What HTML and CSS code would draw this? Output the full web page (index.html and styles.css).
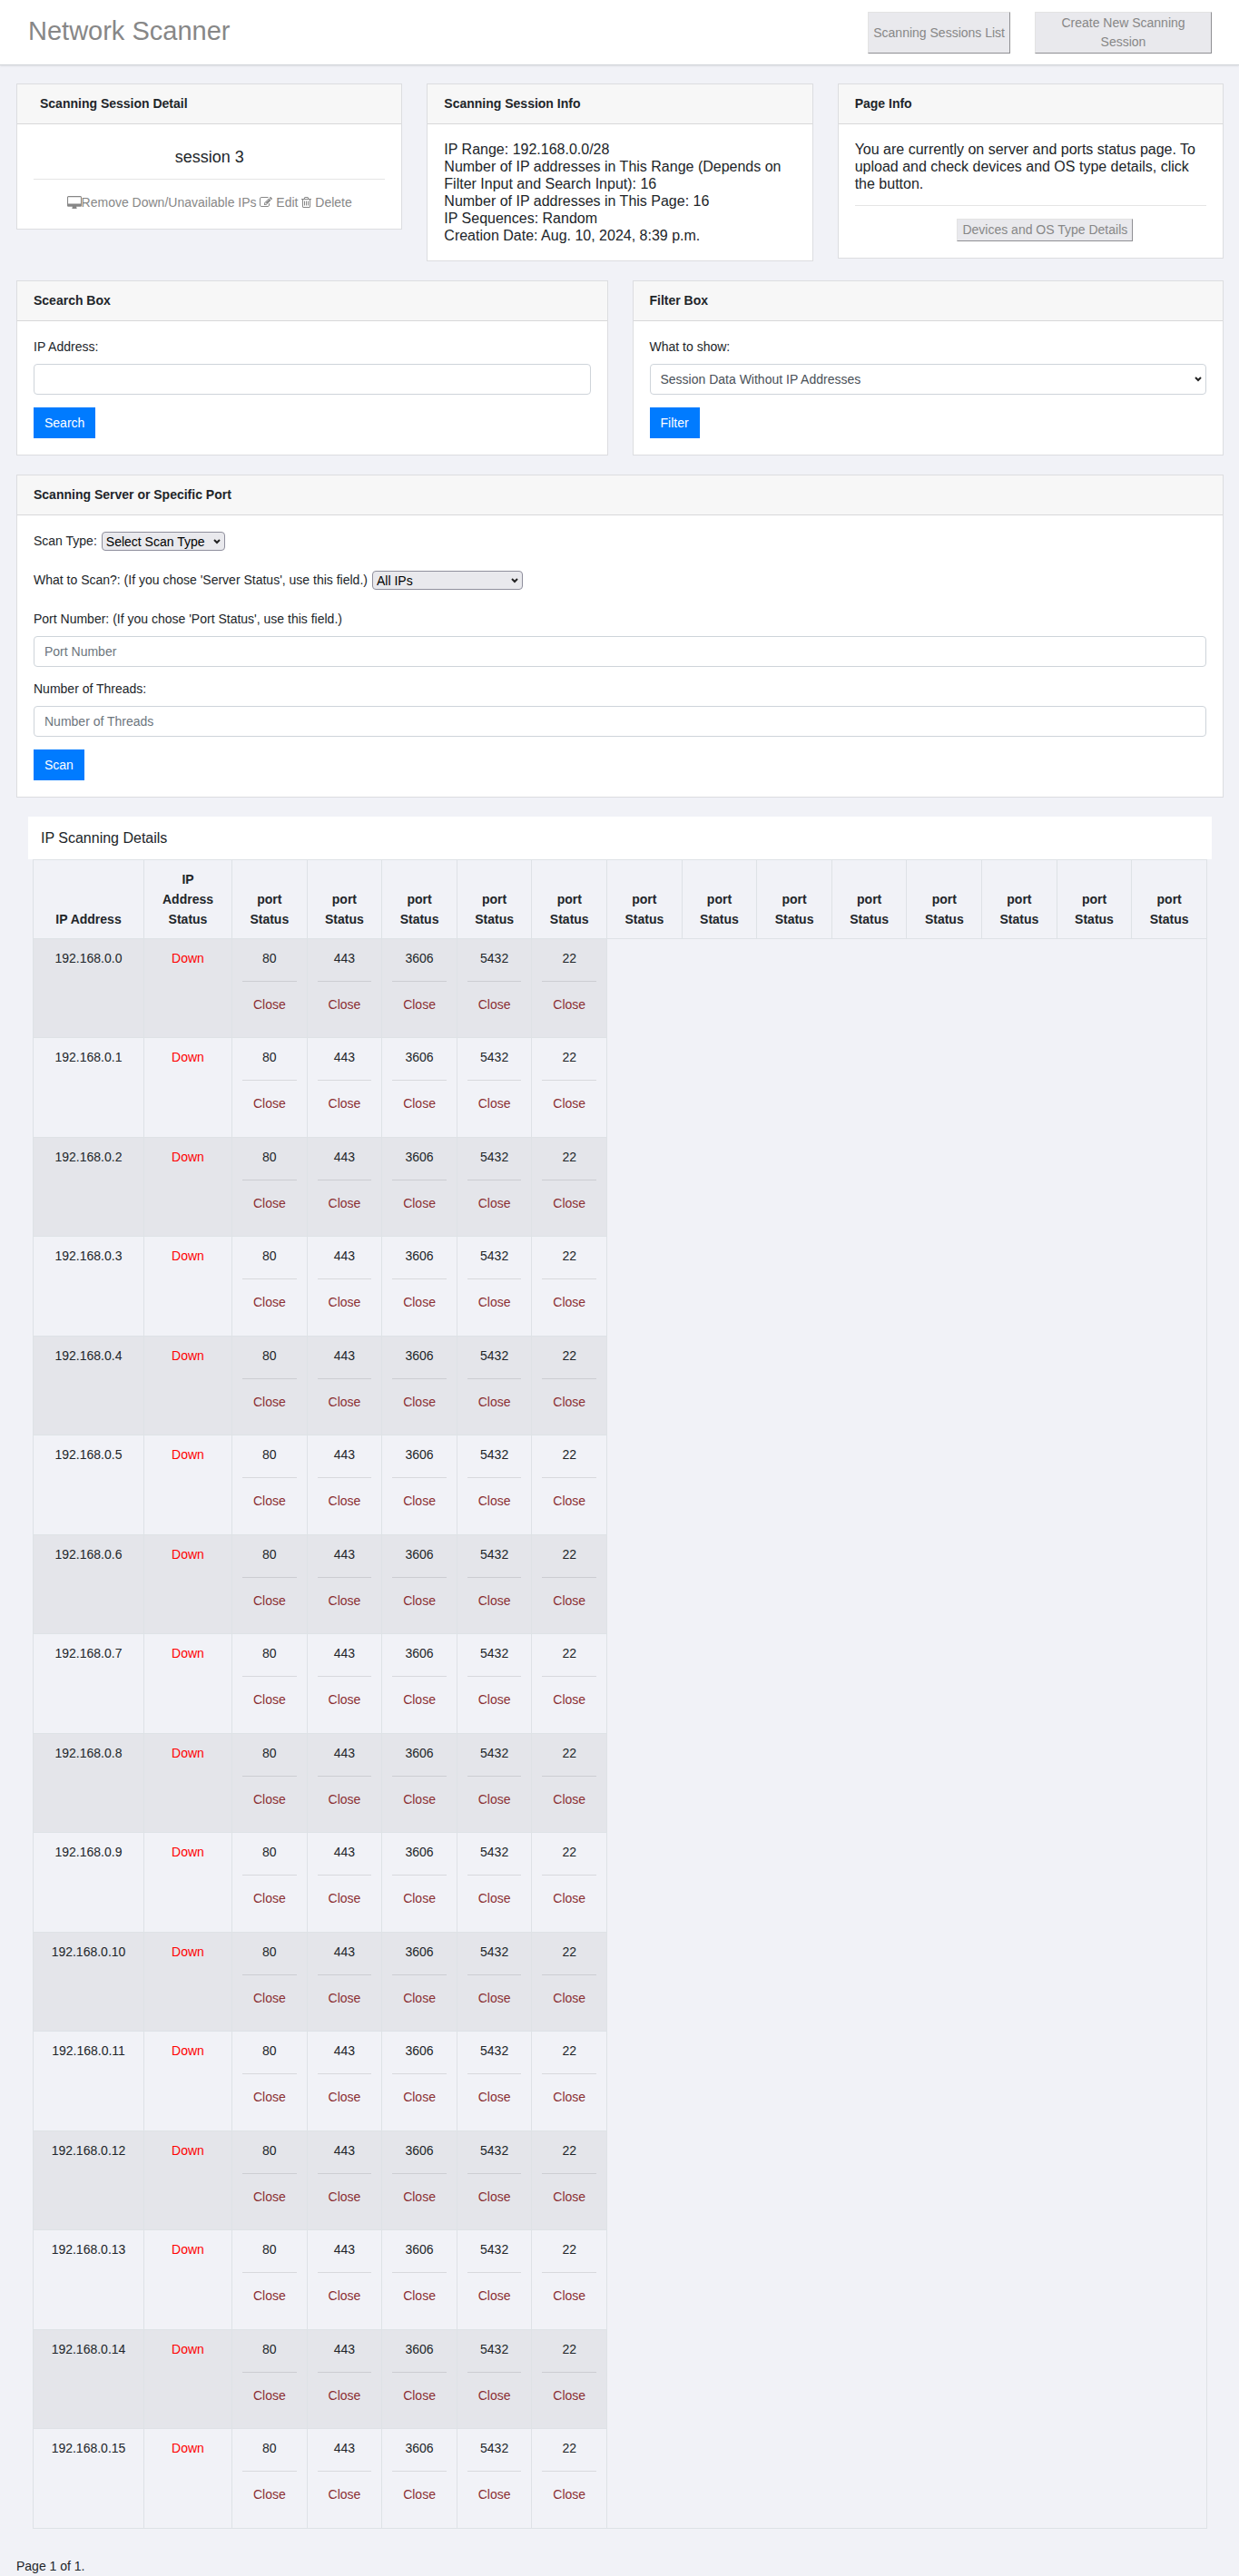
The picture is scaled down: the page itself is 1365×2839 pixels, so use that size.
FILE: index.html
```html
<!DOCTYPE html>
<html lang="en">
<head>
<meta charset="utf-8">
<title>Network Scanner</title>
<link rel="stylesheet" href="styles.css">
</head>
<body>
<header class="topbar">
  <h1 class="brand">Network Scanner</h1>
  <nav class="topbar-actions">
    <button type="button" class="plain-btn">Scanning Sessions List</button>
    <button type="button" class="plain-btn wide">Create New Scanning Session</button>
  </nav>
</header>

<main class="page">
  <div class="grid three">
    <section class="card">
      <h2 class="card-header inset">Scanning Session Detail</h2>
      <div class="card-body centered">
        <h3 class="session-name">session 3</h3>
        <hr>
        <div class="links">
          <a href="#remove"><svg class="icon desktop" viewBox="0 0 1920 1664" aria-hidden="true"><path d="M1792 992v-832q0-13-9.500-22.500t-22.500-9.500h-1600q-13 0-22.500 9.500t-9.500 22.500v832q0 13 9.500 22.500t22.500 9.500h1600q13 0 22.500-9.500t9.500-22.500zm128-832v1088q0 66-47 113t-113 47h-544q0 37 16 77.500t32 71 16 43.500q0 26-19 45t-45 19h-512q-26 0-45-19t-19-45q0-14 16-44t32-70 16-78h-544q-66 0-113-47t-47-113v-1088q0-66 47-113t113-47h1600q66 0 113 47t47 113z"/></svg>Remove Down/Unavailable IPs</a>
          <a href="#edit"><svg class="icon" viewBox="0 0 1792 1792" aria-hidden="true"><path d="M888 1184l116-116-152-152-116 116v56h96v96h56zm440-720q-16-16-33 1l-350 350q-17 17-1 33t33-1l350-350q17-17 1-33zm80 594v190q0 119-84.500 203.500t-203.500 84.500h-832q-119 0-203.500-84.500t-84.500-203.500v-832q0-119 84.500-203.500t203.500-84.500h832q63 0 117 25 15 7 18 23 3 17-9 29l-49 49q-14 14-32 8-23-6-45-6h-832q-66 0-113 47t-47 113v832q0 66 47 113t113 47h832q66 0 113-47t47-113v-126q0-13 9-22l64-64q15-15 35-7t20 29zm-96-738l288 288-672 672h-288v-288zm444 132l-92 92-288-288 92-92q28-28 68-28t68 28l152 152q28 28 28 68t-28 68z"/></svg> Edit</a>
          <a href="#delete"><svg class="icon trash" viewBox="192 0 1408 1792" aria-hidden="true"><path d="M704 736v576q0 14-9 23t-23 9h-64q-14 0-23-9t-9-23v-576q0-14 9-23t23-9h64q14 0 23 9t9 23zm256 0v576q0 14-9 23t-23 9h-64q-14 0-23-9t-9-23v-576q0-14 9-23t23-9h64q14 0 23 9t9 23zm256 0v576q0 14-9 23t-23 9h-64q-14 0-23-9t-9-23v-576q0-14 9-23t23-9h64q14 0 23 9t9 23zm128 724v-948h-896v948q0 22 7 40.500t14.500 27 10.500 8.500h832q3 0 10.500-8.500t14.500-27 7-40.500zm-672-1076h448l-48-117q-7-9-17-11h-317q-10 2-17 11zm928 32v64q0 14-9 23t-23 9h-96v948q0 83-47 143.500t-113 60.500h-832q-66 0-113-58.500t-47-141.500v-952h-96q-14 0-23-9t-9-23v-64q0-14 9-23t23-9h309l70-167q15-37 54-63t79-26h320q40 0 79 26t54 63l70 167h309q14 0 23 9t9 23z"/></svg> Delete</a>
        </div>
      </div>
    </section>

    <section class="card">
      <h2 class="card-header">Scanning Session Info</h2>
      <div class="card-body info">
        <div>IP Range: 192.168.0.0/28</div>
        <div>Number of IP addresses in This Range (Depends on Filter Input and Search Input): 16</div>
        <div>Number of IP addresses in This Page: 16</div>
        <div>IP Sequences: Random</div>
        <div>Creation Date: Aug. 10, 2024, 8:39 p.m.</div>
      </div>
    </section>

    <section class="card">
      <h2 class="card-header">Page Info</h2>
      <div class="card-body info">
        <div>You are currently on server and ports status page. To upload and check devices and OS type details, click the button.</div>
        <hr>
        <div class="info-action"><button type="button" class="plain-btn">Devices and OS Type Details</button></div>
      </div>
    </section>
  </div>

  <div class="grid two">
    <section class="card">
      <h2 class="card-header">Scearch Box</h2>
      <form class="card-body">
        <label class="label" for="ip">IP Address:</label>
        <input class="control" id="ip" type="text">
        <button type="button" class="primary-btn">Search</button>
      </form>
    </section>
    <section class="card">
      <h2 class="card-header">Filter Box</h2>
      <form class="card-body">
        <label class="label" for="show">What to show:</label>
        <select class="control" id="show"><option>Session Data Without IP Addresses</option></select>
        <button type="button" class="primary-btn">Filter</button>
      </form>
    </section>
  </div>

  <section class="card">
    <h2 class="card-header">Scanning Server or Specific Port</h2>
    <form class="card-body">
      <div class="inline-field">
        <label for="type">Scan Type:</label>
        <select class="mini-select" id="type"><option>Select Scan Type</option></select>
      </div>
      <div class="inline-field">
        <label for="what">What to Scan?: (If you chose 'Server Status', use this field.)</label>
        <select class="mini-select ips" id="what"><option>All IPs</option></select>
      </div>
      <label class="label" for="port">Port Number: (If you chose 'Port Status', use this field.)</label>
      <input class="control" id="port" type="text" placeholder="Port Number">
      <label class="label" for="threads">Number of Threads:</label>
      <input class="control" id="threads" type="text" placeholder="Number of Threads">
      <button type="button" class="primary-btn">Scan</button>
    </form>
  </section>

  <section class="details">
    <h2 class="details-title">IP Scanning Details</h2>
    <table class="scan-table">
      <colgroup><col class="col-ip"><col class="col-status"><col span="13"></colgroup>
      <thead>
        <tr><th>IP Address</th><th class="status-head">IP Address Status</th><th>port Status</th><th>port Status</th><th>port Status</th><th>port Status</th><th>port Status</th><th>port Status</th><th>port Status</th><th>port Status</th><th>port Status</th><th>port Status</th><th>port Status</th><th>port Status</th><th>port Status</th></tr>
      </thead>
      <tbody>
        <tr><td>192.168.0.0</td><td class="down">Down</td><td>80<hr><p>Close</p></td><td>443<hr><p>Close</p></td><td>3606<hr><p>Close</p></td><td>5432<hr><p>Close</p></td><td>22<hr><p>Close</p></td></tr>
        <tr><td>192.168.0.1</td><td class="down">Down</td><td>80<hr><p>Close</p></td><td>443<hr><p>Close</p></td><td>3606<hr><p>Close</p></td><td>5432<hr><p>Close</p></td><td>22<hr><p>Close</p></td></tr>
        <tr><td>192.168.0.2</td><td class="down">Down</td><td>80<hr><p>Close</p></td><td>443<hr><p>Close</p></td><td>3606<hr><p>Close</p></td><td>5432<hr><p>Close</p></td><td>22<hr><p>Close</p></td></tr>
        <tr><td>192.168.0.3</td><td class="down">Down</td><td>80<hr><p>Close</p></td><td>443<hr><p>Close</p></td><td>3606<hr><p>Close</p></td><td>5432<hr><p>Close</p></td><td>22<hr><p>Close</p></td></tr>
        <tr><td>192.168.0.4</td><td class="down">Down</td><td>80<hr><p>Close</p></td><td>443<hr><p>Close</p></td><td>3606<hr><p>Close</p></td><td>5432<hr><p>Close</p></td><td>22<hr><p>Close</p></td></tr>
        <tr><td>192.168.0.5</td><td class="down">Down</td><td>80<hr><p>Close</p></td><td>443<hr><p>Close</p></td><td>3606<hr><p>Close</p></td><td>5432<hr><p>Close</p></td><td>22<hr><p>Close</p></td></tr>
        <tr><td>192.168.0.6</td><td class="down">Down</td><td>80<hr><p>Close</p></td><td>443<hr><p>Close</p></td><td>3606<hr><p>Close</p></td><td>5432<hr><p>Close</p></td><td>22<hr><p>Close</p></td></tr>
        <tr><td>192.168.0.7</td><td class="down">Down</td><td>80<hr><p>Close</p></td><td>443<hr><p>Close</p></td><td>3606<hr><p>Close</p></td><td>5432<hr><p>Close</p></td><td>22<hr><p>Close</p></td></tr>
        <tr><td>192.168.0.8</td><td class="down">Down</td><td>80<hr><p>Close</p></td><td>443<hr><p>Close</p></td><td>3606<hr><p>Close</p></td><td>5432<hr><p>Close</p></td><td>22<hr><p>Close</p></td></tr>
        <tr><td>192.168.0.9</td><td class="down">Down</td><td>80<hr><p>Close</p></td><td>443<hr><p>Close</p></td><td>3606<hr><p>Close</p></td><td>5432<hr><p>Close</p></td><td>22<hr><p>Close</p></td></tr>
        <tr><td>192.168.0.10</td><td class="down">Down</td><td>80<hr><p>Close</p></td><td>443<hr><p>Close</p></td><td>3606<hr><p>Close</p></td><td>5432<hr><p>Close</p></td><td>22<hr><p>Close</p></td></tr>
        <tr><td>192.168.0.11</td><td class="down">Down</td><td>80<hr><p>Close</p></td><td>443<hr><p>Close</p></td><td>3606<hr><p>Close</p></td><td>5432<hr><p>Close</p></td><td>22<hr><p>Close</p></td></tr>
        <tr><td>192.168.0.12</td><td class="down">Down</td><td>80<hr><p>Close</p></td><td>443<hr><p>Close</p></td><td>3606<hr><p>Close</p></td><td>5432<hr><p>Close</p></td><td>22<hr><p>Close</p></td></tr>
        <tr><td>192.168.0.13</td><td class="down">Down</td><td>80<hr><p>Close</p></td><td>443<hr><p>Close</p></td><td>3606<hr><p>Close</p></td><td>5432<hr><p>Close</p></td><td>22<hr><p>Close</p></td></tr>
        <tr><td>192.168.0.14</td><td class="down">Down</td><td>80<hr><p>Close</p></td><td>443<hr><p>Close</p></td><td>3606<hr><p>Close</p></td><td>5432<hr><p>Close</p></td><td>22<hr><p>Close</p></td></tr>
        <tr><td>192.168.0.15</td><td class="down">Down</td><td>80<hr><p>Close</p></td><td>443<hr><p>Close</p></td><td>3606<hr><p>Close</p></td><td>5432<hr><p>Close</p></td><td>22<hr><p>Close</p></td></tr>
      </tbody>
    </table>
  </section>

  <footer class="pager">Page 1 of 1.</footer>
</main>
</body>
</html>
```
FILE: styles.css
```css
*, *::before, *::after { box-sizing: border-box; }

body {
  margin: 0;
  background: #f1f2f7;
  color: #212529;
  font: 14px/21px "Liberation Sans", Arial, sans-serif;
}

h1, h2, h3, p { margin: 0; font-weight: 400; }

hr {
  height: 1px;
  margin: 14px 0;
  border: 0;
  background: rgba(0, 0, 0, .1);
}

a { color: #878787; text-decoration: none; }

button, input, select { margin: 0; font: inherit; }

/* Top bar */
.topbar {
  display: flex;
  justify-content: space-between;
  align-items: flex-start;
  padding: 13px 30px 12px 31px;
  border-bottom: 1px solid #d0d3d8;
  box-shadow: 0 1px 2px rgba(0, 0, 0, .08);
  background: #fff;
}

.brand { color: #878787; font-size: 29px; line-height: 42px; }

.topbar-actions { display: flex; gap: 27px; }

.plain-btn {
  padding: 1px 5px;
  border: 1px solid;
  border-color: #e3e3e3 #8f8f93 #8f8f93 #e3e3e3;
  border-radius: 0;
  background: #e9e9ed;
  color: #878787;
}

.plain-btn.wide { width: 195px; padding: 1px 20px; }

/* Page and cards */
.page { padding: 20px 17px 0 18px; }

.grid {
  display: grid;
  align-items: start;
  gap: 27px;
  margin-bottom: 21px;
}

.three { grid-template-columns: repeat(3, 1fr); }
.two { grid-template-columns: repeat(2, 1fr); }

.card { border: 1px solid #dcdde0; background: #fff; }

.card-header {
  padding: 11px 18px;
  border-bottom: 1px solid #d8d8d9;
  background: #f7f7f7;
  font-size: 14px;
  font-weight: 700;
}

.card-header.inset { padding-left: 25px; }

.card-body { padding: 18px; }
.centered { text-align: center; }
.links { line-height: 22px; }
.info { font-size: 16px; line-height: 19px; }
.info-action { padding-left: 32px; text-align: center; line-height: 21px; }
.info .plain-btn { display: inline-block; vertical-align: top; font-size: 14px; }

.session-name {
  margin: 4px 0 10px;
  font-size: 18px;
  line-height: 28px;
}
.session-name + hr { margin-top: 0; }

.icon { width: 14px; height: 14px; fill: currentColor; vertical-align: -2px; }
.icon.desktop { width: 16px; }
.icon.trash { width: 11px; }

/* Forms */
.label { display: block; margin-bottom: 8px; }

.control {
  display: block;
  width: 100%;
  height: 34px;
  margin-bottom: 14px;
  padding: 5px 11px;
  border: 1px solid #ced4da;
  border-radius: 4px;
  background-color: #fff;
  color: #495057;
}
.control::placeholder { color: #6c757d; opacity: 1; }

select {
  appearance: none;
  background-image: url("data:image/svg+xml,%3Csvg xmlns='http://www.w3.org/2000/svg' viewBox='0 0 8 6'%3E%3Cpath d='M1 1l3 3 3-3' fill='none' stroke='%23222' stroke-width='2'/%3E%3C/svg%3E");
  background-repeat: no-repeat;
  background-position: right 4px center;
  background-size: 8px 6px;
}

.primary-btn {
  display: block;
  height: 34px;
  padding: 0 12px;
  border: 0;
  background: #007bff;
  color: #fff;
}

.inline-field {
  display: flex;
  align-items: center;
  gap: 5px;
  margin-bottom: 22px;
}

.mini-select {
  width: 136px;
  height: 21px;
  padding: 0 4px;
  border: 1px solid #8f8f9d;
  border-radius: 4px;
  background-color: #e9e9ed;
  color: #000;
  line-height: 18px;
}
.mini-select.ips { width: 166px; }

/* Results table */
.details { margin: 21px 13px 0; }

.details-title {
  padding: 13px 14px;
  background: #fff;
  font-size: 16px;
}

.scan-table {
  width: calc(100% - 10px);
  margin: 0 5px;
  border: 1px solid #dee2e6;
  border-collapse: collapse;
  table-layout: fixed;
  text-align: center;
  line-height: 22px;
}

.col-ip { width: 122px; }
.col-status { width: 97px; }

.scan-table th,
.scan-table td {
  padding: 10px 11px;
  border: 1px solid #dee2e6;
  vertical-align: top;
}
.scan-table th { vertical-align: bottom; }
.scan-table .status-head { padding: 10px 18px; }
.scan-table tbody tr { height: 109px; }
.scan-table tbody tr:nth-child(even) { height: 110px; }
.scan-table tbody tr:nth-child(odd) td { background: rgba(0, 0, 0, .05); }
.scan-table td p { color: #8b2f33; }
.scan-table .down { color: #f00; }

.pager { padding-top: 31px; }
```
